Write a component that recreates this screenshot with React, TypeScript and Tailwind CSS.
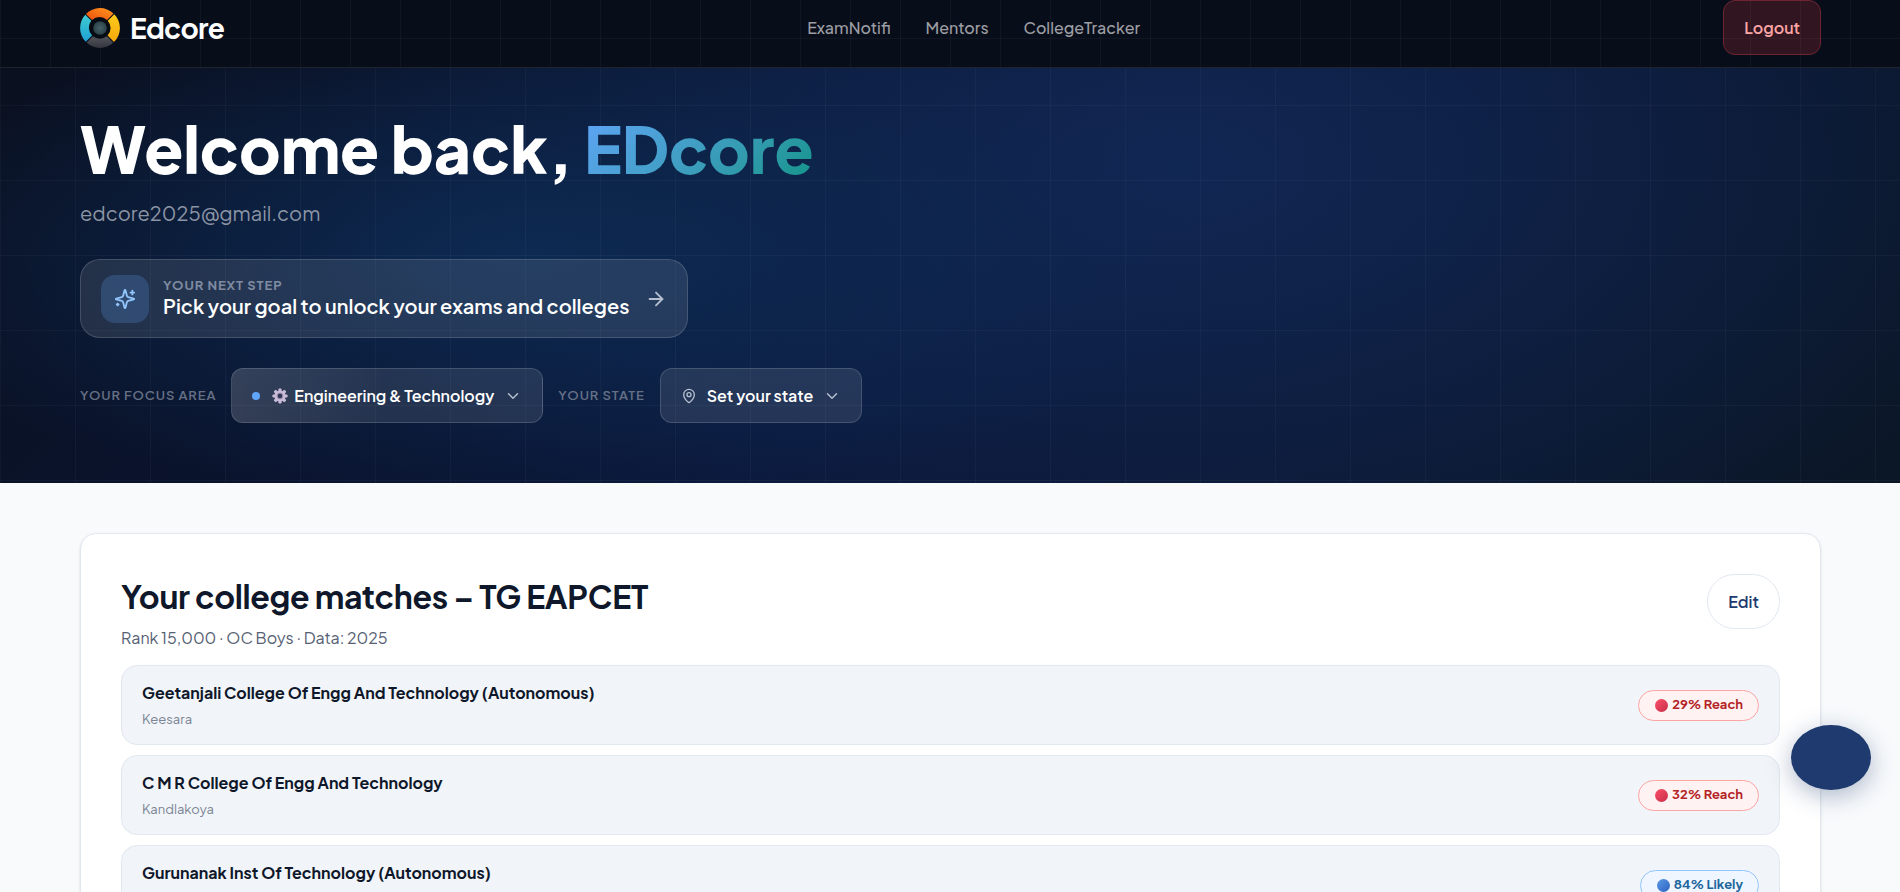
import { ArrowRight, ChevronDown, MapPin } from "lucide-react";

interface College {
  name: string;
  place: string;
  chance: string;
  level: "reach" | "likely";
}

const colleges: College[] = [
  { name: "Geetanjali College Of Engg And Technology (Autonomous)", place: "Keesara", chance: "29% Reach", level: "reach" },
  { name: "C M R College Of Engg And Technology", place: "Kandlakoya", chance: "32% Reach", level: "reach" },
  { name: "Gurunanak Inst Of Technology (Autonomous)", place: "", chance: "84% Likely", level: "likely" },
];

const badgeStyles = {
  reach: "border-[#fca5a5] bg-[#fef2f2] text-[#b42325]",
  likely: "border-[#93c5fd] bg-[#eff6ff] text-[#20659c]",
};

const dotStyles = {
  reach: "bg-linear-135 from-[#fb5068] to-[#c92c4a]",
  likely: "bg-linear-135 from-[#5a9ae6] to-[#2f62c0]",
};

const Logo = () => (
  <svg viewBox="0 0 40 40" className="size-10" aria-hidden="true">
    <defs>
      <linearGradient id="top" x1="0" y1="1" x2="1" y2="0">
        <stop offset="0" stopColor="#ee4b0c" />
        <stop offset="1" stopColor="#ff9a1f" />
      </linearGradient>
      <linearGradient id="right" x1="0" y1="0" x2="0" y2="1">
        <stop offset="0" stopColor="#fccb1b" />
        <stop offset="1" stopColor="#f7a80c" />
      </linearGradient>
      <linearGradient id="left" x1="0" y1="0" x2="0" y2="1">
        <stop offset="0" stopColor="#3fcbd2" />
        <stop offset="1" stopColor="#1fa0d3" />
      </linearGradient>
      <linearGradient id="bottom" x1="0" y1="0" x2="0" y2="1">
        <stop offset="0" stopColor="#54555c" />
        <stop offset="1" stopColor="#33353d" />
      </linearGradient>
      <radialGradient id="core">
        <stop offset="0" stopColor="#46626a" />
        <stop offset="1" stopColor="#2b4148" />
      </radialGradient>
    </defs>
    <circle cx="20" cy="20" r="13" fill="#060b14" />
    <path d="M6 6 A19.5 19.5 0 0 1 33.5 5.5 L27 12 A11 11 0 0 0 12 12 Z" fill="url(#top)" />
    <path d="M34.3 6.3 A19.5 19.5 0 0 1 34 34 L27.6 27.6 A11 11 0 0 0 27.8 12.8 Z" fill="url(#right)" />
    <path d="M33.2 34.8 A19.5 19.5 0 0 1 6.6 34.6 L12.9 28.3 A11 11 0 0 0 26.8 28.3 Z" fill="url(#bottom)" />
    <path d="M5.3 6.8 A19.5 19.5 0 0 0 5.8 33.8 L12.1 27.5 A11 11 0 0 1 11.3 12.8 Z" fill="url(#left)" />
    <circle cx="20" cy="20" r="6.8" fill="url(#core)" />
  </svg>
);

const Sparkles = () => (
  <svg
    viewBox="0 0 24 24"
    className="size-[22px]"
    fill="none"
    stroke="currentColor"
    strokeWidth="2"
    strokeLinecap="round"
    strokeLinejoin="round"
    aria-hidden="true"
  >
    <path d="M9.937 15.5A2 2 0 0 0 8.5 14.063l-6.135-1.582a.5.5 0 0 1 0-.962L8.5 9.936A2 2 0 0 0 9.937 8.5l1.582-6.135a.5.5 0 0 1 .963 0L14.063 8.5A2 2 0 0 0 15.5 9.937l6.135 1.581a.5.5 0 0 1 0 .964L15.5 14.063a2 2 0 0 0-1.437 1.437l-1.582 6.135a.5.5 0 0 1-.963 0z" />
    <path d="M20 3v4M22 5h-4M4 17v2M5 18H3" />
  </svg>
);

const Gear = () => (
  <svg viewBox="0 0 16 16" className="size-4" aria-hidden="true">
    <g fill="#c9bcd9">
      <rect x="6.4" y="0.4" width="3.2" height="15.2" rx="1" />
      <rect x="6.4" y="0.4" width="3.2" height="15.2" rx="1" transform="rotate(45 8 8)" />
      <rect x="6.4" y="0.4" width="3.2" height="15.2" rx="1" transform="rotate(90 8 8)" />
      <rect x="6.4" y="0.4" width="3.2" height="15.2" rx="1" transform="rotate(135 8 8)" />
      <circle cx="8" cy="8" r="5.6" />
    </g>
    <circle cx="8" cy="8" r="3" fill="none" stroke="#a795b8" strokeWidth="1" />
    <circle cx="8" cy="8" r="2.4" fill="#303a55" />
  </svg>
);

const Header = () => (
  <header className="h-[68px] border-b border-[#20232b] bg-[#080d1a] bg-[linear-gradient(90deg,#ffffff0a_1px,transparent_1px),linear-gradient(#ffffff0a_1px,transparent_1px)] bg-[size:50px_50px] bg-[position:0_-12px] pr-[79px] pl-20">
    <div className="flex items-start justify-between">
      <a href="#" className="flex items-center gap-2.5 pt-2 text-[28px] leading-10 font-bold tracking-tight text-white">
        <Logo />
        Edcore
      </a>
      <nav className="flex gap-[35px] pt-4 text-base leading-6 font-medium text-[#9c9ea3]">
        <a href="#">ExamNotifi</a>
        <a href="#">Mentors</a>
        <a href="#">CollegeTracker</a>
      </nav>
      <button className="h-[55px] rounded-xl border border-[#6e2431] bg-[#ef44442e] px-5 text-base font-semibold text-[#fca5a5]">
        Logout
      </button>
    </div>
  </header>
);

const Hero = () => (
  <section className="bg-[#0b1528] bg-[linear-gradient(90deg,#ffffff08_1px,transparent_1px),linear-gradient(#ffffff08_1px,transparent_1px),radial-gradient(ellipse_36%_60%_at_28%_46%,#0d2a52_0%,transparent_100%),radial-gradient(ellipse_46%_115%_at_62%_24%,#112753_0%,transparent_100%),linear-gradient(135deg,#0a101f_0%,#0a1638_50%,#0b1726_100%)] bg-[size:75px_75px,75px_75px,auto,auto,auto] bg-[position:0_37px,0_37px,0_0,0_0,0_0] px-20 pt-[45px] pb-[60px]">
    <h1 className="text-[64px] leading-[70px] font-extrabold text-white">
      Welcome back,{" "}
      <span className="bg-linear-135 from-[#60a5fa] to-[#0d9488] bg-clip-text text-transparent">EDcore</span>
    </h1>
    <p className="mt-3.5 text-xl leading-8 text-[#8b94a4]">edcore2025@gmail.com</p>

    <button className="mt-[30px] flex h-[79px] items-center gap-3.5 rounded-[20px] border border-white/15 bg-white/10 px-5 text-left">
      <span className="flex size-12 items-center justify-center rounded-[14px] bg-[#60a5fa38] text-[#93c5fd]">
        <Sparkles />
      </span>
      <span className="flex flex-col pb-0.5">
        <span className="text-[13px] leading-4 font-bold tracking-[0.07em] text-[#7f8ba0]">YOUR NEXT STEP</span>
        <span className="text-xl leading-[26px] font-semibold text-white">Pick your goal to unlock your exams and colleges</span>
      </span>
      <ArrowRight size={22} className="ml-0.5 text-[#b5bfce]" />
    </button>

    <div className="mt-[30px] flex items-center gap-[15px]">
      <span className="text-[13px] font-semibold tracking-[0.07em] text-[#667085]">YOUR FOCUS AREA</span>
      <button className="flex h-[55px] items-center rounded-xl border border-white/15 bg-[linear-gradient(90deg,#ffffff2b,#ffffff1a_50%)] px-5 text-base font-semibold text-white">
        <span className="mr-3 size-2 rounded-full bg-[#60a5fa]" />
        <Gear />
        <span className="mr-2.5 ml-1.5">Engineering &amp; Technology</span>
        <ChevronDown size={18} className="text-[#b5bfce]" />
      </button>
      <span className="text-[13px] font-semibold tracking-[0.07em] text-[#667085]">YOUR STATE</span>
      <button className="flex h-[55px] items-center gap-2.5 rounded-xl border border-white/15 bg-white/10 px-5 text-base font-semibold text-white">
        <MapPin size={16} className="text-[#b5bfce]" />
        Set your state
        <ChevronDown size={18} className="text-[#b5bfce]" />
      </button>
    </div>
  </section>
);

const CollegeRow: React.FC<College> = ({ name, place, chance, level }) => (
  <li className="flex h-20 items-center justify-between rounded-2xl border border-[#e2e8f0] bg-[#f1f5f9] px-5">
    <div>
      <h3 className="text-base leading-6 font-bold text-[#0f172a]">{name}</h3>
      <p className="mt-1 h-5 text-[13px] leading-5 text-[#7b8494]">{place}</p>
    </div>
    <span className={`flex h-[31px] items-center gap-1 rounded-full border pr-[15px] pl-4 text-[13px] font-bold ${badgeStyles[level]}`}>
      <i className={`size-[13px] rounded-full ${dotStyles[level]}`} />
      {chance}
    </span>
  </li>
);

export default function App() {
  return (
    <div className="min-h-screen bg-[#f8fafc] font-['Plus_Jakarta_Sans',Inter,sans-serif]">
      <Header />
      <Hero />
      <main className="pt-[50px] pr-[79px] pb-12 pl-20">
        <section className="rounded-2xl border border-[#e2e8f0] bg-white p-10 shadow-sm">
          <div className="flex items-start justify-between">
            <div>
              <h2 className="text-[32px] leading-[45px] font-bold tracking-[-0.01em] text-[#0f172a]">
                Your college matches – TG EAPCET
              </h2>
              <p className="mt-[7px] text-base leading-6 text-[#566173]">Rank 15,000 · OC Boys · Data: 2025</p>
            </div>
            <button className="h-[55px] rounded-full border border-[#e2e8f0] px-5 text-base font-semibold text-[#1e3a6e]">
              Edit
            </button>
          </div>
          <ul className="mt-[15px] space-y-2.5">
            {colleges.map((college) => (
              <CollegeRow key={college.name} {...college} />
            ))}
          </ul>
        </section>
      </main>
      <button
        aria-label="Open chat"
        className="fixed right-[29px] bottom-[102px] h-[65px] w-20 rounded-[50%] bg-[#1e3a6e] shadow-[0_6px_24px_#1e3a6e59]"
      />
    </div>
  );
}
